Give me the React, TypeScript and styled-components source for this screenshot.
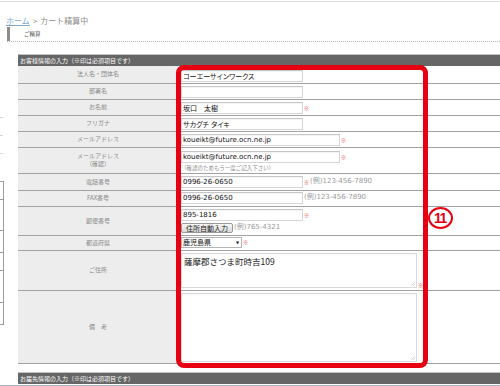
import React from 'react';
import styled, { createGlobalStyle } from 'styled-components';

const Global = createGlobalStyle`
  html, body { margin: 0; padding: 0; background: #fff; }
  body { font-family: "Noto Sans CJK JP", "Liberation Sans", sans-serif; }
`;

const Page = styled.div`
  position: relative;
  width: 500px;
  height: 386px;
  overflow: hidden;
  background: #fff;
  display: flex;
  flex-direction: column;
`;

const TopRule = styled.div`
  margin-top: 1px;
  height: 1px;
  background: #dcdde0;
`;

const Crumbs = styled.nav`
  margin: 14px 0 0 6px;
  height: 10px;
  display: flex;
  gap: 3px;
  font: 8px/10px "Noto Sans CJK JP", sans-serif;
  color: #8a8a8a;
  white-space: nowrap;
`;

const CrumbLink = styled.a`
  color: #7fa8cc;
  text-decoration: underline;
`;

const PageTitle = styled.h2`
  margin: 1px 0 0 7px;
  height: 15px;
  box-sizing: border-box;
  display: flex;
  align-items: center;
  border-bottom: 1px dotted #b8b8b8;
  font: normal 5.5px/8px "Noto Sans CJK JP", sans-serif;
  color: #555;
  &::before {
    content: '';
    width: 3px;
    height: 14px;
    background: #8c8c8c;
    margin-right: 14px;
  }
`;

const Section = styled.div`
  display: flex;
  margin-top: 12px;
`;

const Side = styled.div`
  width: 18px;
  flex: none;
  padding-top: 63px;
  display: flex;
  flex-direction: column;
  align-items: flex-start;
`;

const SideTick = styled.div`
  width: 3px;
  height: 1px;
  background: #d6d6d6;
  margin-bottom: 17px;
`;

const SideBox = styled.div`
  margin-top: 10px;
  width: 3px;
  border-top: 1px solid #9c9c9c;
  border-right: 1px solid #9c9c9c;
`;

const SideCell = styled.div<{ $h: number }>`
  height: ${p => p.$h}px;
  box-sizing: border-box;
  border-bottom: 1px solid #9c9c9c;
`;

const Main = styled.div`
  flex: 1;
  display: flex;
  flex-direction: column;
`;

const SectionBar = styled.div<{ $gap?: number }>`
  margin-top: ${p => p.$gap ?? 0}px;
  height: 12px;
  box-sizing: border-box;
  border-top: 1px solid #c2c2c2;
  background: #666;
  color: #fff;
  padding-left: 2px;
  font: 6px/11px "Noto Sans CJK JP", sans-serif;
  white-space: nowrap;
`;

const Row = styled.div<{ $h: number }>`
  display: grid;
  grid-template-columns: 160px 1fr;
  height: ${p => p.$h}px;
  box-sizing: border-box;
  border-bottom: 1px solid #a2a2a2;
`;

const Label = styled.div`
  background: #ededed;
  display: flex;
  align-items: center;
  justify-content: center;
  text-align: center;
  font: 6px/8px "Noto Sans CJK JP", sans-serif;
  color: #8a8a8a;
`;

const Cell = styled.div<{ $pt?: number }>`
  background: #fff;
  padding: ${p => p.$pt ?? 2}px 0 0 3px;
  display: flex;
  flex-direction: column;
  align-items: flex-start;
  gap: 2px;
  min-width: 0;
`;

const Line = styled.div<{ $end?: boolean }>`
  display: flex;
  align-items: ${p => (p.$end ? 'flex-end' : 'center')};
  white-space: nowrap;
`;

const TextBox = styled.input<{ $w: number }>`
  width: ${p => p.$w}px;
  height: 12px;
  box-sizing: border-box;
  margin: 0;
  padding: 0 1px;
  border: 1px solid #d6d6d6;
  border-top-color: #c6c6c6;
  box-shadow: inset 0 1px 1px rgba(0, 0, 0, 0.05);
  background: #fff;
  font: 7px "DejaVu Sans", "Noto Sans CJK JP", sans-serif;
  font-feature-settings: "palt";
  color: #111;
  outline: none;
`;

const AreaWrap = styled.div`
  position: relative;
  display: flex;
  flex: none;
`;

const Area = styled.textarea<{ $h: number }>`
  display: block;
  width: 236px;
  height: ${p => p.$h}px;
  box-sizing: border-box;
  margin: 0;
  padding: 2px 2px;
  border: 1px solid #dadada;
  box-shadow: inset 0 1px 1px rgba(0, 0, 0, 0.04);
  font: 8.5px/11px "Noto Sans CJK JP", sans-serif;
  color: #222;
  outline: none;
  resize: none;
  overflow: hidden;
`;

const Grip = styled.svg`
  position: absolute;
  right: 2px;
  bottom: 2px;
  width: 5px;
  height: 5px;
  pointer-events: none;
`;

const Req = styled.span`
  color: #e8343c;
  font: 5px/6px "Noto Sans CJK JP", sans-serif;
  margin-left: 1px;
`;

const Example = styled.span`
  font: 7px/9px "DejaVu Sans", "Noto Sans CJK JP", sans-serif;
  color: #9a9a9a;
  margin-left: 1px;
`;

const Note = styled.div`
  font: 5.5px/7px "Noto Sans CJK JP", sans-serif;
  color: #8a8a8a;
  white-space: nowrap;
`;

const AutoButton = styled.button`
  width: 52px;
  height: 10px;
  box-sizing: border-box;
  margin: 0;
  padding: 0;
  border: 1px solid #9a9a9a;
  border-radius: 2px;
  background: linear-gradient(#f7f7f7, #d9d9d9);
  font: 7px/8px "Noto Sans CJK JP", sans-serif;
  color: #222;
`;

const SelectWrap = styled.div`
  position: relative;
  display: flex;
  width: 61px;
  height: 11px;
  flex: none;
`;

const SelectBox = styled.select`
  appearance: none;
  -webkit-appearance: none;
  display: block;
  width: 61px;
  height: 11px;
  min-height: 0;
  box-sizing: border-box;
  margin: 0;
  padding: 0 1px;
  border: 1px solid #b4b4b4;
  border-radius: 0;
  background: #fff;
  font-family: "Noto Sans CJK JP", sans-serif;
  font-size: 7px;
  line-height: 9px;
  color: #111;
  outline: none;
`;

const SelectArrow = styled.span`
  position: absolute;
  right: 3px;
  top: 3px;
  font: 4px/5px "DejaVu Sans", sans-serif;
  color: #222;
  pointer-events: none;
`;

const BottomStrip = styled.div`
  margin-top: 1px;
  height: 2px;
  background: #a6b6c8;
`;

const Highlight = styled.div`
  position: absolute;
  left: 176px;
  top: 65px;
  width: 252px;
  height: 303px;
  box-sizing: border-box;
  border: 5px solid #e60012;
  border-radius: 8px;
  pointer-events: none;
`;

const Badge = styled.div`
  position: absolute;
  left: 428px;
  top: 207px;
  width: 25px;
  height: 22px;
  box-sizing: border-box;
  border: 2.5px solid #e60012;
  border-radius: 50%;
  display: flex;
  align-items: center;
  justify-content: center;
  color: #e60012;
  font: bold 14px/1 "Liberation Sans", sans-serif;
  letter-spacing: -1.5px;
  padding-right: 1px;
`;

const sideCells = [18, 31, 22, 18, 32, 22];

function TextArea({ h, value }: { h: number; value: string }) {
  return (
    <AreaWrap>
      <Area $h={h} defaultValue={value} />
      <Grip viewBox="0 0 5 5">
        <path d="M5 1 L1 5 M5 3 L3 5" stroke="#d0d0d0" strokeWidth="0.8" fill="none" />
      </Grip>
    </AreaWrap>
  );
}

export default function App() {
  return (
    <Page>
      <Global />
      <TopRule />
      <Crumbs>
        <CrumbLink href="#">ホーム</CrumbLink>
        <span>&gt;</span>
        <span>カート精算中</span>
      </Crumbs>
      <PageTitle>ご精算</PageTitle>
      <Section>
        <Side>
          <SideTick />
          <SideTick />
          <SideTick />
          <SideBox>
            {sideCells.map((h, i) => (
              <SideCell key={i} $h={h} />
            ))}
          </SideBox>
        </Side>
        <Main>
          <SectionBar>お客様情報の入力（※印は必須項目です）</SectionBar>

          <Row $h={18}>
            <Label>法人名・団体名</Label>
            <Cell $pt={4}>
              <TextBox $w={122} defaultValue="コーエーサインワークス" />
            </Cell>
          </Row>
          <Row $h={16}>
            <Label>部署名</Label>
            <Cell>
              <TextBox $w={122} defaultValue="" />
            </Cell>
          </Row>
          <Row $h={16}>
            <Label>お名前</Label>
            <Cell>
              <Line>
                <TextBox $w={122} defaultValue="坂口　太樹" />
                <Req>※</Req>
              </Line>
            </Cell>
          </Row>
          <Row $h={16}>
            <Label>フリガナ</Label>
            <Cell>
              <TextBox $w={122} defaultValue="サカグチ タイキ" />
            </Cell>
          </Row>
          <Row $h={16}>
            <Label>メールアドレス</Label>
            <Cell>
              <Line>
                <TextBox $w={159} defaultValue="koueikt@future.ocn.ne.jp" />
                <Req>※</Req>
              </Line>
            </Cell>
          </Row>
          <Row $h={26}>
            <Label>
              メールアドレス
              <br />
              （確認）
            </Label>
            <Cell $pt={3}>
              <Line>
                <TextBox $w={159} defaultValue="koueikt@future.ocn.ne.jp" />
                <Req>※</Req>
              </Line>
              <Note>（確認のためもう一度ご記入下さい）</Note>
            </Cell>
          </Row>
          <Row $h={17}>
            <Label>電話番号</Label>
            <Cell>
              <Line>
                <TextBox $w={122} defaultValue="0996-26-0650" />
                <Req>※</Req>
                <Example>(例)123-456-7890</Example>
              </Line>
            </Cell>
          </Row>
          <Row $h={16}>
            <Label>FAX番号</Label>
            <Cell $pt={1}>
              <Line>
                <TextBox $w={122} defaultValue="0996-26-0650" />
                <Example>(例)123-456-7890</Example>
              </Line>
            </Cell>
          </Row>
          <Row $h={29}>
            <Label>郵便番号</Label>
            <Cell>
              <Line>
                <TextBox $w={122} defaultValue="895-1816" />
                <Req>※</Req>
              </Line>
              <Line>
                <AutoButton type="button">住所自動入力</AutoButton>
                <Example>(例)765-4321</Example>
              </Line>
            </Cell>
          </Row>
          <Row $h={15}>
            <Label>都道府県</Label>
            <Cell $pt={1}>
              <Line>
                <SelectWrap>
                  <SelectBox defaultValue="鹿児島県">
                    <option value="鹿児島県">鹿児島県</option>
                  </SelectBox>
                  <SelectArrow>▼</SelectArrow>
                </SelectWrap>
                <Req>※</Req>
              </Line>
            </Cell>
          </Row>
          <Row $h={40}>
            <Label>ご住所</Label>
            <Cell>
              <Line $end>
                <TextArea h={35} value="薩摩郡さつま町時吉109" />
                <Req>※</Req>
              </Line>
            </Cell>
          </Row>
          <Row $h={73}>
            <Label>備　考</Label>
            <Cell>
              <TextArea h={69} value="" />
            </Cell>
          </Row>

          <SectionBar $gap={8}>お届先情報の入力（※印は必須項目です）</SectionBar>
        </Main>
      </Section>
      <BottomStrip />
      <Highlight />
      <Badge>11</Badge>
    </Page>
  );
}
